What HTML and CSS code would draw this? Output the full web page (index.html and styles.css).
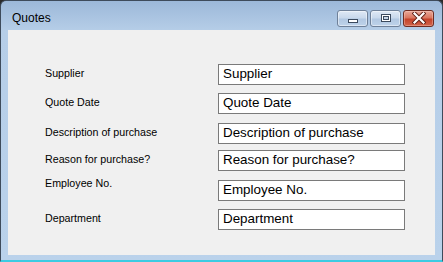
FILE: index.html
```html
<!DOCTYPE html>
<html>
<head>
<meta charset="utf-8">
<link rel="stylesheet" href="styles.css">
</head>
<body>
<div class="window">
  <div class="titlebar">
    <span class="title">Quotes</span>
    <div class="controls">
      <div class="btn btn-min">
        <svg width="12" height="6" viewBox="0 0 12 6"><rect x="1.5" y="1.5" width="9" height="3" fill="#fff" stroke="#3b4a5e" stroke-width="1"/></svg>
      </div>
      <div class="btn btn-max">
        <svg width="12" height="10" viewBox="0 0 12 10"><rect x="1.5" y="1.5" width="9" height="7" fill="#fff" stroke="#3b4a5e" stroke-width="1"/><rect x="3.5" y="3.5" width="5" height="3" fill="#c7d5e6" stroke="#3b4a5e" stroke-width="1"/></svg>
      </div>
      <div class="btn btn-close">
        <svg width="14" height="12" viewBox="0 0 14 12"><path d="M2.5 1.5 L11.5 10.5 M11.5 1.5 L2.5 10.5" stroke="#5a1e14" stroke-width="4" stroke-linecap="square"/><path d="M2.5 1.5 L11.5 10.5 M11.5 1.5 L2.5 10.5" stroke="#ffffff" stroke-width="2.2" stroke-linecap="square"/></svg>
      </div>
    </div>
  </div>
  <div class="client">
    <div class="form">
      <div class="label">Supplier</div>
      <div class="field">Supplier</div>
      <div class="label">Quote Date</div>
      <div class="field">Quote Date</div>
      <div class="label">Description of purchase</div>
      <div class="field">Description of purchase</div>
      <div class="label">Reason for purchase?</div>
      <div class="field">Reason for purchase?</div>
      <div class="label label-raised">Employee No.</div>
      <div class="field">Employee No.</div>
      <div class="label">Department</div>
      <div class="field">Department</div>
    </div>
  </div>
</div>
</body>
</html>
```
FILE: styles.css
```css
html, body {
  margin: 0;
  padding: 0;
  background: #2a2a2a;
}
.window {
  box-sizing: border-box;
  width: 443px;
  height: 262px;
  border: 1px solid #3e4b5b;
  border-bottom: 2px solid #3ccbe2;
  border-radius: 6px 6px 0 0;
  background: linear-gradient(to bottom, #9cb8d9 0px, #b6cee8 30px, #bad2eb 100%);
  padding: 0 7px 5px 7px;
  display: flex;
  flex-direction: column;
}
.titlebar {
  box-sizing: border-box;
  height: 29px;
  padding-top: 5px;
  display: flex;
  align-items: center;
  justify-content: space-between;
}
.title {
  font-family: "Liberation Sans", Arial, sans-serif;
  font-size: 12px;
  color: #000;
  padding-left: 4px;
}
.controls {
  display: flex;
  gap: 2px;
  margin-right: 1px;
}
.btn {
  box-sizing: border-box;
  width: 31px;
  height: 17px;
  border: 1px solid #6f8199;
  border-radius: 3px;
  display: flex;
  align-items: center;
  justify-content: center;
  background: linear-gradient(to bottom, #dfe9f5 0%, #c9d9ec 45%, #b2c8e2 55%, #bed3ea 100%);
  box-shadow: inset 0 0 0 1px rgba(255,255,255,0.45);
}
.btn-min svg {
  margin-top: 5px;
}
.btn-close {
  border-color: #6e2c22;
  background: linear-gradient(to bottom, #e9a99a 0%, #d97660 45%, #c4432b 55%, #d2644a 100%);
  box-shadow: inset 0 0 0 1px rgba(255,220,210,0.35);
}
.client {
  flex: 1;
  background: #f0f0f0;
}
.form {
  display: grid;
  grid-template-columns: 173px 187px;
  grid-template-rows: 29px 30px 27px 30px 29px 21px;
  padding: 34px 0 0 37px;
}
.label {
  font-family: "Liberation Sans", Arial, sans-serif;
  font-size: 10.7px;
  line-height: 13px;
  color: #000;
  padding-top: 3px;
}
.label-raised {
  margin-top: -6px;
}
.field {
  box-sizing: border-box;
  height: 21px;
  border: 1px solid #7a7a7a;
  background: #fff;
  font-family: "Liberation Sans", Arial, sans-serif;
  font-size: 13.4px;
  line-height: 18px;
  color: #000;
  padding-left: 4px;
  white-space: nowrap;
  overflow: hidden;
}
```
